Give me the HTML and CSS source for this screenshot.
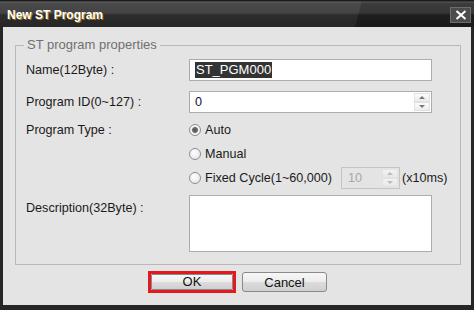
FILE: index.html
```html
<!DOCTYPE html>
<html lang="en">
<head>
    <meta charset="UTF-8">
    <title>New ST Program</title>
    <link rel="stylesheet" href="styles.css">
</head>
<body>

<div class="window">
    <div class="titlebar">
        <div class="tab"><span class="title">New ST Program</span></div>
        <div class="close">
            <svg width="12" height="10" viewBox="0 0 12 10"><path d="M1.5 1 L10.5 9 M10.5 1 L1.5 9" stroke="#fff" stroke-width="2"/></svg>
        </div>
    </div>

    <div class="client">
        <fieldset class="group">
            <legend>ST program properties</legend>

            <div class="row row-name">
                <label>Name(12Byte) :</label>
                <div class="textbox"><span class="selected">ST_PGM000</span></div>
            </div>

            <div class="row row-id">
                <label>Program ID(0~127) :</label>
                <div class="textbox">
                    <span class="value">0</span>
                    <div class="spin">
                        <div class="spin-btn"><span class="arr up"></span></div>
                        <div class="spin-btn"><span class="arr down"></span></div>
                    </div>
                </div>
            </div>

            <div class="row row-radio">
                <label>Program Type :</label>
                <div class="radio"><span class="dot checked"></span>Auto</div>
            </div>

            <div class="row row-radio">
                <label></label>
                <div class="radio"><span class="dot"></span>Manual</div>
            </div>

            <div class="row row-radio">
                <label></label>
                <div class="radio">
                    <span class="dot"></span>Fixed Cycle(1~60,000)
                    <div class="textbox small disabled">
                        <span class="value">10</span>
                        <div class="spin">
                            <div class="spin-btn"><span class="arr up"></span></div>
                            <div class="spin-btn"><span class="arr down"></span></div>
                        </div>
                    </div>
                    <span class="unit">(x10ms)</span>
                </div>
            </div>

            <div class="row row-desc">
                <label>Description(32Byte) :</label>
                <div class="textarea"></div>
            </div>
        </fieldset>

        <div class="buttons">
            <div class="mark"><button class="btn ok">OK</button></div>
            <button class="btn">Cancel</button>
        </div>
    </div>
</div>

</body>
</html>
```

FILE: styles.css
```css
body {
    margin: 0;
    font-family: "Liberation Sans", Arial, sans-serif;
    font-size: 12.6px;
    color: #1a1a1a;
}
.window {
    width: 474px;
    height: 310px;
    background: #262626;
    display: flex;
    flex-direction: column;
    overflow: hidden;
}
.titlebar {
    height: 27px;
    display: flex;
    align-items: center;
    background: linear-gradient(#1c1c1c 0, #1c1c1c 1px, #5a5a5a 2px, #3c3c3c 3px, #363636 13px, #1e1e1e 15px, #1a1a1a 27px);
}
.tab {
    flex: 0 0 362px;
    height: 27px;
    display: flex;
    align-items: center;
    background: linear-gradient(#1c1c1c 0, #1c1c1c 1px, #666 2px, #4a4a4a 3px, #444 13px, #2c2c2c 15px, #262626 27px);
    clip-path: polygon(0 0, 100% 0, calc(100% - 7px) 100%, 0 100%);
}
.title {
    margin-left: 7px;
    margin-top: 3px;
    color: #fff;
    font-weight: bold;
    font-size: 12px;
    text-shadow: 1px 1px 0 rgba(190, 140, 20, 0.8);
}
.close {
    margin-left: auto;
    margin-right: 3px;
    margin-top: 2px;
    width: 19px;
    height: 14px;
    border: 1px solid #6c6c6c;
    background: #4c4c4c;
    display: flex;
    align-items: center;
    justify-content: center;
}
.client {
    margin: 0 3px;
    height: 278px;
    background: #e4e4e4;
    display: flex;
    flex-direction: column;
}
.group {
    margin: 11px 10px 0 12px;
    padding: 0 29px 12px 10px;
    border: 1px solid #b8b8b8;
    border-radius: 0;
    min-width: 0;
}
.group legend {
    padding: 0 3px;
    margin-left: -2px;
    color: #707070;
    font-size: 13px;
    line-height: 14px;
}
.row {
    display: grid;
    grid-template-columns: 163px 243px;
    align-items: center;
}
.row-name { height: 22px; margin-top: 7px; }
.row-id { height: 22px; margin-top: 10px; }
.row-radio { height: 24px; }
.row-id + .row-radio { margin-top: 5px; }
.row-desc { height: 57px; margin-top: 5px; align-items: start; }
.row-desc label { padding-top: 6px; }
.textbox {
    box-sizing: border-box;
    height: 22px;
    border: 1px solid #acacac;
    background: #fff;
    display: flex;
    align-items: center;
    padding-left: 5px;
}
.selected {
    background: #333;
    color: #fff;
    padding: 1px 1px;
    line-height: 14px;
    font-size: 13px;
}
.value { flex: 1; color: #101030; }
.spin {
    width: 16px;
    height: 18px;
    display: flex;
    flex-direction: column;
    margin-right: 1px;
}
.spin-btn {
    flex: 1;
    background: linear-gradient(#fcfcfc, #ececec);
    border: 1px solid #e2e2e2;
    display: flex;
    align-items: center;
    justify-content: center;
}
.arr {
    width: 0;
    height: 0;
    border-left: 3px solid transparent;
    border-right: 3px solid transparent;
}
.arr.up { border-bottom: 3px solid #777; }
.arr.down { border-top: 3px solid #777; }
.radio {
    display: flex;
    align-items: center;
    white-space: nowrap;
}
.dot {
    box-sizing: border-box;
    flex: none;
    width: 12px;
    height: 12px;
    border-radius: 50%;
    border: 1px solid #8e8e8e;
    background: radial-gradient(circle at 40% 35%, #fff, #e0e0e0);
    margin-right: 4px;
}
.dot.checked {
    background: radial-gradient(circle, #555 0, #6a6a6a 2.5px, #d8d8d8 3.2px, #fff 4px, #ececec 5px);
}
.textbox.small {
    flex: none;
    width: 59px;
    margin-left: 9px;
    padding-left: 6px;
}
.textbox.disabled {
    background: #e4e4e4;
    border-color: #c4c4c4;
}
.textbox.disabled .value { color: #a8a8a8; }
.textbox.disabled .spin-btn { background: linear-gradient(#f2f2f2, #e8e8e8); }
.textbox.disabled .arr.up { border-bottom-color: #bbb; }
.textbox.disabled .arr.down { border-top-color: #bbb; }
.unit { margin-left: 2px; }
.textarea {
    height: 57px;
    border: 1px solid #acacac;
    background: #fff;
    box-sizing: border-box;
}
.buttons {
    display: flex;
    justify-content: center;
    align-items: center;
    gap: 6px;
    margin-top: 6px;
    margin-left: 1px;
}
.mark {
    border: 3px solid #e2191e;
    display: flex;
}
.btn {
    box-sizing: border-box;
    width: 85px;
    height: 20px;
    padding: 0;
    border: 1px solid #8a8a8a;
    border-radius: 3px;
    background: linear-gradient(#f7f7f7 0, #ececec 50%, #dcdcdc 51%, #d0d0d0 100%);
    font-family: "Liberation Sans", Arial, sans-serif;
    font-size: 13px;
    color: #111;
}
.btn.ok {
    width: 82px;
    height: 16px;
    line-height: 14px;
    border-radius: 1px;
}
```
